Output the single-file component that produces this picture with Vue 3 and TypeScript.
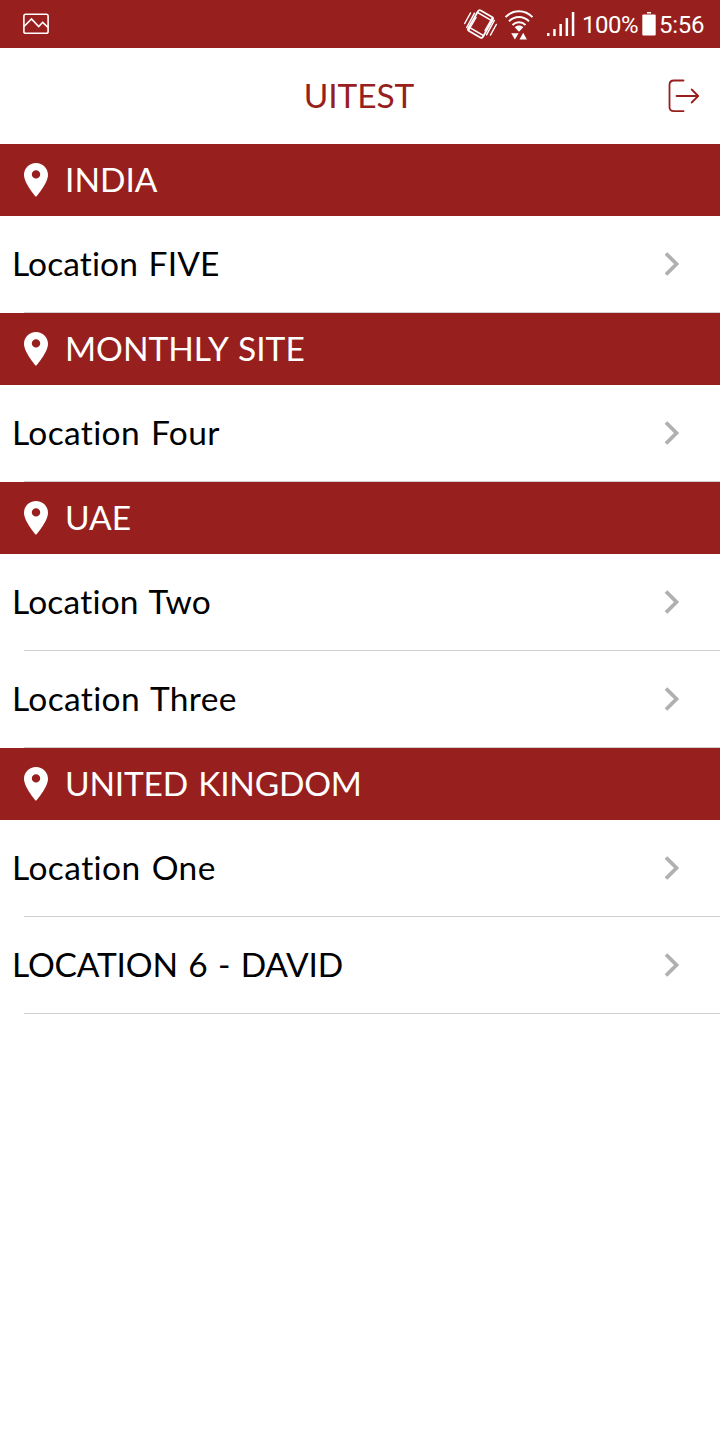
<script setup lang="ts">
interface Label {
  text: string
  tracking: number
}
interface Group {
  title: Label
  items: Label[]
}

const groups: Group[] = [
  { title: { text: 'INDIA', tracking: 0 }, items: [{ text: 'Location FIVE', tracking: 0.1 }] },
  { title: { text: 'MONTHLY SITE', tracking: 0 }, items: [{ text: 'Location Four', tracking: 0.36 }] },
  {
    title: { text: 'UAE', tracking: 0 },
    items: [
      { text: 'Location Two', tracking: 0.2 },
      { text: 'Location Three', tracking: 0.36 },
    ],
  },
  {
    title: { text: 'UNITED KINGDOM', tracking: -0.22 },
    items: [
      { text: 'Location One', tracking: 0.44 },
      { text: 'LOCATION 6 - DAVID', tracking: -0.16 },
    ],
  },
]
</script>

<template>
  <main class="screen">
    <div class="status">
      <svg class="picture" width="26" height="22" viewBox="0 0 26 22" fill="none" stroke="#fff" stroke-width="1.6">
        <rect x="0.9" y="1.3" width="24.2" height="19" rx="1.8" />
        <path d="M1 13.5 8.5 6l7.2 7.5 4-4.2 5.3 5" />
      </svg>
      <svg class="vibrate" width="34" height="32" viewBox="0 0 34 32" fill="none" stroke="#fff" stroke-width="1.7" stroke-linecap="round">
        <g transform="rotate(30 17.5 16)">
          <rect x="9" y="4.200" width="17" height="23.600" rx="2" />
          <path d="M9 7.500h17M9 24.500h17" />
        </g>
        <path d="M1.700 15.500 7.500 5M3.700 19.500 11.500 5.200M5.500 22.500 13 9.500M33.300 16.500 27.500 27M31.300 12.500 23.500 26.800M29.500 9.500 22 22.500" stroke-width="1.5" />
      </svg>
      <svg class="wifi" width="30" height="32" viewBox="0 0 30 32" fill="none" stroke="#fff" stroke-width="1.9">
        <path d="M1.500 9.200c7.500-8 19.500-8 27 0M5 13.200c5.800-5.700 14.200-5.700 20 0M8.500 17c3.800-3.600 9.200-3.600 13 0" />
        <path d="M10.700 19.300c2.400-2.400 6.200-2.400 8.600 0L15 23.800z" fill="#fff" stroke="none" />
        <path d="M7.200 25.200h7.400l-3.700 6.400zM15.500 31.500h7.400l-3.700-6.800z" fill="#fff" stroke="none" />
      </svg>
      <svg class="signal" width="30" height="26" viewBox="0 0 30 26" fill="#fff">
        <path d="M1 22h2.500v3H1zM7.200 18h2.500v7H7.200zM13.400 13h2.500v12h-2.500zM19.600 7h2.500v18h-2.500zM25.800 1h2.500v24h-2.500z" />
      </svg>
      <span class="percent">100%</span>
      <svg class="battery" width="14" height="26" viewBox="0 0 14 26" fill="#fff">
        <path d="M5 1h4v1.500H5zM1.300 3.500h11.400q1 0 1 1v19q0 1-1 1H1.300q-1 0-1-1v-19q0-1 1-1z" />
      </svg>
      <span class="clock">5:56</span>
    </div>

    <header class="bar">
      <h1 class="title">UITEST</h1>
      <svg class="logout" width="36" height="36" viewBox="0 0 36 36" fill="none" stroke="#971f1e" stroke-width="1.8" stroke-linecap="round" stroke-linejoin="round">
        <path d="M19.500 2.500H10q-4.500 0-4.500 4.500v22q0 4.200 4.500 4.200h9.500" />
        <path d="M12.500 18H34M27.700 11.500 34.200 18l-6.500 6.500" />
      </svg>
    </header>

    <section v-for="group in groups" :key="group.title.text">
      <h2 class="group">
        <svg class="pin" width="24" height="34" viewBox="0 0 24 34" fill="#fff" fill-rule="evenodd">
          <path d="M12 0C5.300 0 0 5.200 0 11.800 0 20.500 12 34 12 34s12-13.500 12-22.200C24 5.200 18.700 0 12 0zm0 7.200a4.200 4.200 0 1 1 0 8.400 4.200 4.200 0 0 1 0-8.400z" />
        </svg>
        <span class="label" :style="{ letterSpacing: group.title.tracking + 'px' }">{{ group.title.text }}</span>
      </h2>
      <ul class="list">
        <li v-for="item in group.items" :key="item.text" class="row">
          <span class="label" :style="{ letterSpacing: item.tracking + 'px' }">{{ item.text }}</span>
          <svg class="chevron" width="16" height="24" viewBox="0 0 16 24" fill="none" stroke="#b0b0b0" stroke-width="3.800">
            <path d="M2 1.500 12.500 12 2 22.500" />
          </svg>
        </li>
      </ul>
    </section>
  </main>
</template>

<style>
body {
  margin: 0;
  background: #fff;
}
</style>

<style scoped>
.screen {
  width: 720px;
  min-height: 1440px;
  background: #fff;
  font-family: Lato, "Liberation Sans", sans-serif;
  font-size: 33.5px;
  font-variant-ligatures: none;
  color: #000;
}
.status {
  display: flex;
  align-items: center;
  height: 48px;
  box-sizing: border-box;
  padding-left: 23px;
  background: #971f1e;
  color: #fff;
  font-family: Roboto, sans-serif;
  font-size: 24px;
  line-height: 48px;
  white-space: nowrap;
}
.status svg {
  flex: none;
}
.vibrate {
  margin-left: 414px;
}
.wifi {
  margin-left: 7px;
}
.signal {
  margin-left: 12px;
}
.percent {
  width: 60px;
  padding: 2px 0 0 6px;
  box-sizing: border-box;
  letter-spacing: -0.5px;
}
.battery {
  margin-left: 6px;
}
.clock {
  margin-left: 3px;
  padding-top: 2px;
  letter-spacing: -0.3px;
}
.bar {
  display: grid;
  grid-template-columns: 56px 1fr 56px;
  align-items: center;
  height: 96px;
  color: #971f1e;
}
.title {
  grid-column: 2;
  margin: 0;
  padding-right: 2px;
  font-size: 33.5px;
  font-weight: 400;
  line-height: 94px;
  height: 96px;
  letter-spacing: -0.1px;
  text-align: center;
}
.group {
  display: flex;
  align-items: center;
  gap: 17px;
  height: 72px;
  margin: 0;
  padding-left: 24px;
  background: #971f1e;
  color: #fff;
  font-size: 33.5px;
  font-weight: 400;
  line-height: 72px;
}
.label {
  padding-bottom: 2px;
  word-spacing: 2px;
}
.list {
  margin: 0;
  padding: 0;
  list-style: none;
}
.row {
  display: flex;
  align-items: center;
  justify-content: space-between;
  height: 97px;
  box-sizing: border-box;
  padding: 0 40px 1px 12px;
  line-height: 94px;
  background: linear-gradient(#d0d0d0, #d0d0d0) 24px 96px / 696px 1px no-repeat;
}
</style>
